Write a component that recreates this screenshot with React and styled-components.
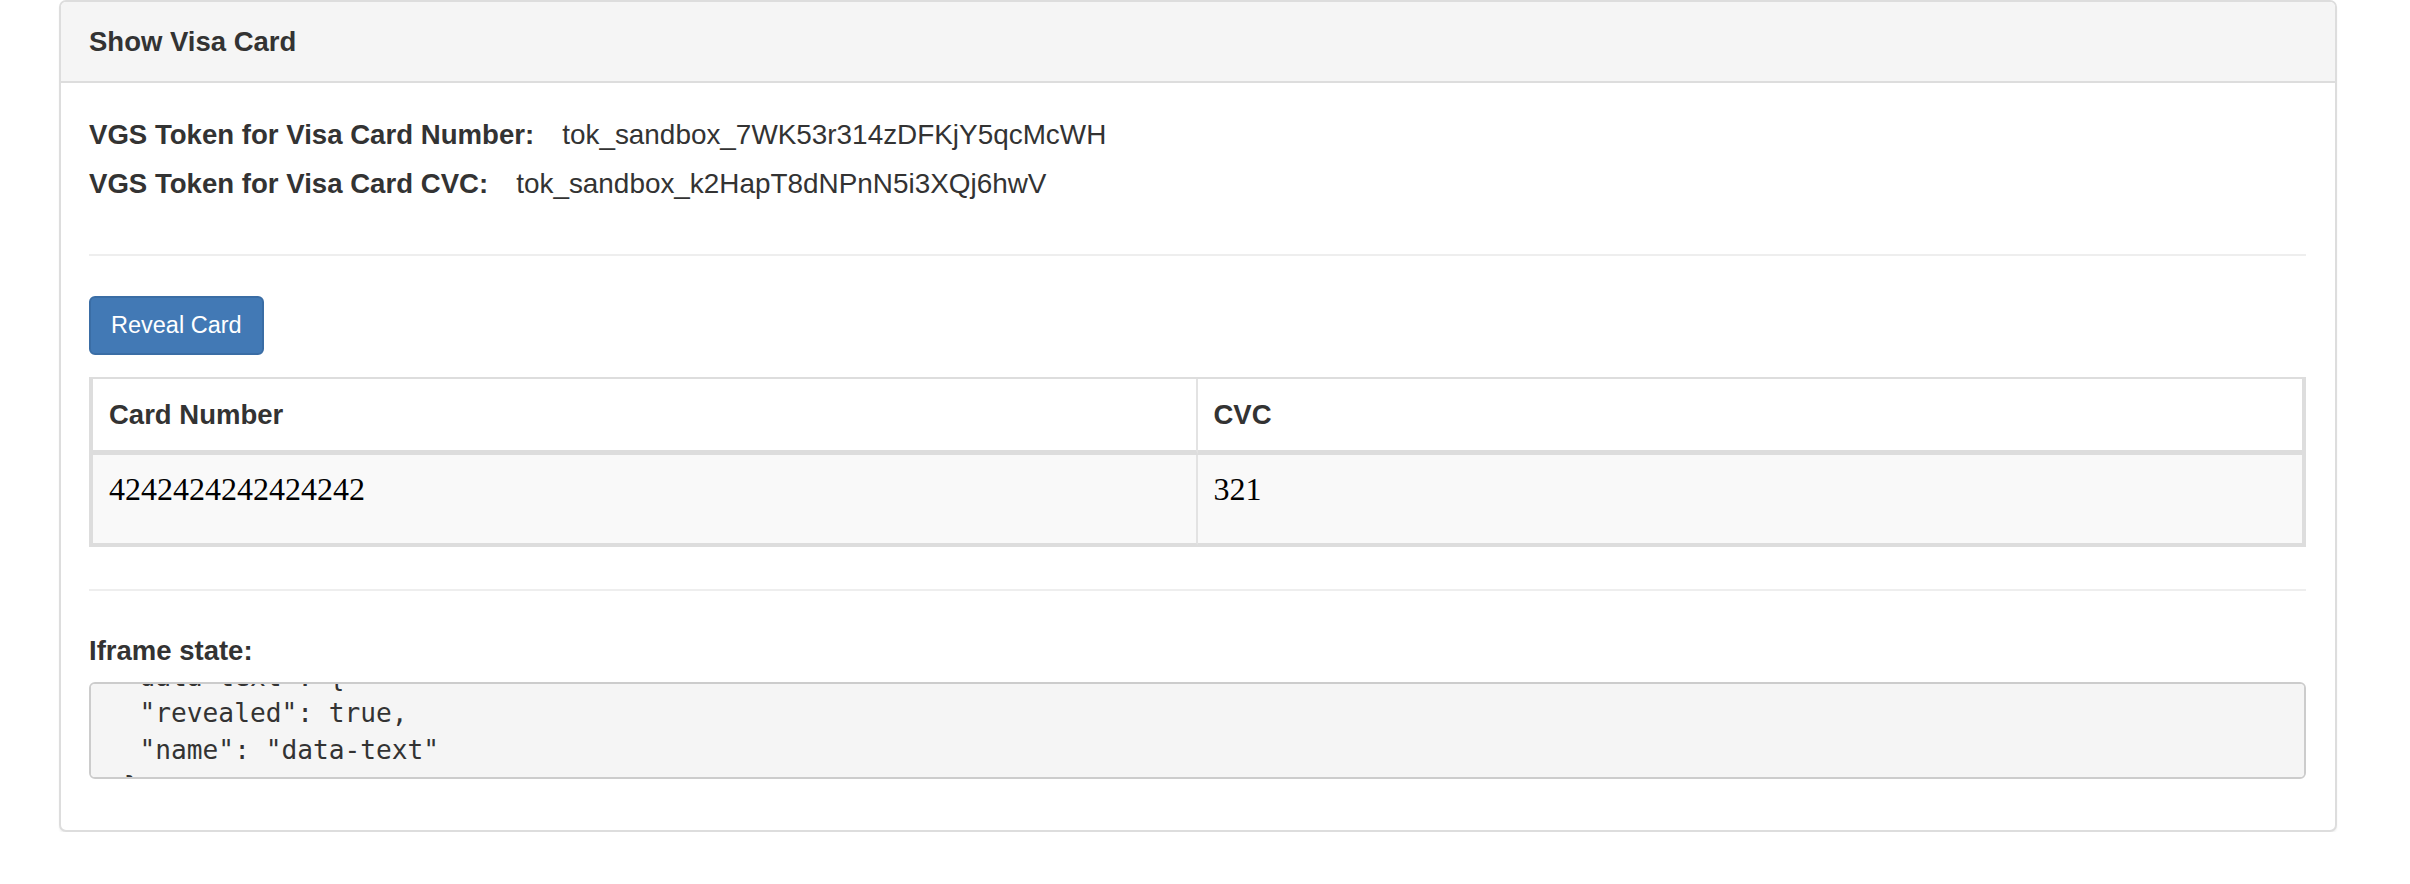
import React, { useLayoutEffect, useRef } from 'react';
import styled, { createGlobalStyle } from 'styled-components';

const GlobalStyle = createGlobalStyle`
  html, body {
    margin: 0;
    padding: 0;
    background: #fff;
  }
  body {
    font-family: "Liberation Sans", Arial, Helvetica, sans-serif;
    color: #333;
  }
  * {
    box-sizing: border-box;
  }
`;

const Page = styled.div`
  padding: 0 73px 0 59px;
`;

const Panel = styled.section`
  background: #fff;
  border: 2px solid #ddd;
  border-radius: 7px;
  box-shadow: 0 2px 2px rgba(0, 0, 0, 0.05);
  overflow: hidden;
`;

const PanelHeading = styled.header`
  background: #f5f5f5;
  border-bottom: 2px solid #ddd;
  padding: 25px 28px 24px;
`;

const PanelTitle = styled.h3`
  margin: 0;
  font-size: 27.5px;
  line-height: 30px;
  font-weight: 700;
  color: #333;
`;

const PanelBody = styled.div`
  padding: 27px 29px 51px 28px;
`;

const TokenRow = styled.div`
  display: flex;
  font-size: 27.6px;
  line-height: 49px;
  white-space: nowrap;
`;

const TokenLabel = styled.strong`
  font-weight: 700;
`;

const TokenValue = styled.span`
  margin-left: 28px;
  font-size: 27.9px;
`;

const Divider = styled.hr`
  border: 0;
  border-top: 2px solid #eee;
  margin: ${(p) => p.$top}px 0 40px;
  height: 0;
`;

const ButtonBar = styled.div`
  display: flex;
  margin-bottom: 22px;
`;

const RevealButton = styled.button`
  display: inline-flex;
  align-items: center;
  height: 59px;
  padding: 0 20px;
  font-family: "Liberation Sans", Arial, sans-serif;
  font-size: 23.5px;
  line-height: 1;
  color: #fff;
  background: #4279b5;
  border: 2px solid #3a6da5;
  border-radius: 6px;
  cursor: pointer;
`;

const CardTable = styled.table`
  width: 100%;
  table-layout: fixed;
  border-collapse: separate;
  border-spacing: 0;
  border: 2px solid #ddd;
`;

const HeadCell = styled.th`
  padding: 16px;
  font-size: 27.5px;
  line-height: 39.3px;
  font-weight: 700;
  text-align: left;
  background: #fff;
  border-bottom: 5px solid #ddd;
  border-left: ${(p) => (p.$first ? '2px solid #ddd' : '0')};
  border-right: ${(p) => (p.$first ? '2px solid #e3e3e3' : '2px solid #ddd')};
`;

const BodyCell = styled.td`
  padding: 16px 16px 35px;
  vertical-align: top;
  background: #f9f9f9;
  border-bottom: 2px solid #ddd;
  border-left: ${(p) => (p.$first ? '2px solid #ddd' : '0')};
  border-right: ${(p) => (p.$first ? '2px solid #e3e3e3' : '2px solid #ddd')};
`;

const RevealedValue = styled.div`
  font-family: "Liberation Serif", "Times New Roman", serif;
  font-size: 32px;
  line-height: 37px;
  color: #000;
`;

const StateLabel = styled.strong`
  display: block;
  font-size: 27.5px;
  line-height: 39.3px;
  font-weight: 700;
  margin-bottom: 11px;
`;

const StateBox = styled.pre`
  margin: 0;
  height: 97px;
  padding: 16px 17px;
  font-family: "DejaVu Sans Mono", Menlo, monospace;
  font-size: 26.2px;
  line-height: 36.4px;
  color: #333;
  background: #f5f5f5;
  border: 2px solid #ccc;
  border-radius: 6px;
  overflow: auto;
  scrollbar-width: none;
  &::-webkit-scrollbar {
    display: none;
  }
`;

const tokens = [
  { label: 'VGS Token for Visa Card Number:', value: 'tok_sandbox_7WK53r314zDFKjY5qcMcWH' },
  { label: 'VGS Token for Visa Card CVC:', value: 'tok_sandbox_k2HapT8dNPnN5i3XQj6hwV' },
];

const iframeState = { 'data-text': { revealed: true, name: 'data-text' } };

const App = () => {
  const stateRef = useRef(null);

  useLayoutEffect(() => {
    // the state box is scrolled a little, as in the live page
    if (stateRef.current) stateRef.current.scrollTop = 77;
  }, []);

  return (
    <Page>
      <GlobalStyle />
      <Panel>
        <PanelHeading>
          <PanelTitle>Show Visa Card</PanelTitle>
        </PanelHeading>
        <PanelBody>
          {tokens.map((t) => (
            <TokenRow key={t.label}>
              <TokenLabel>{t.label}</TokenLabel>
              <TokenValue>{t.value}</TokenValue>
            </TokenRow>
          ))}

          <Divider $top={46} />

          <ButtonBar>
            <RevealButton type="button">Reveal Card</RevealButton>
          </ButtonBar>

          <CardTable>
            <thead>
              <tr>
                <HeadCell $first>Card Number</HeadCell>
                <HeadCell>CVC</HeadCell>
              </tr>
            </thead>
            <tbody>
              <tr>
                <BodyCell $first>
                  <RevealedValue>4242424242424242</RevealedValue>
                </BodyCell>
                <BodyCell>
                  <RevealedValue>321</RevealedValue>
                </BodyCell>
              </tr>
            </tbody>
          </CardTable>

          <Divider $top={42} />

          <StateLabel>Iframe state:</StateLabel>
          <StateBox ref={stateRef}>{JSON.stringify(iframeState, null, 1)}</StateBox>
        </PanelBody>
      </Panel>
    </Page>
  );
};

export default App;
